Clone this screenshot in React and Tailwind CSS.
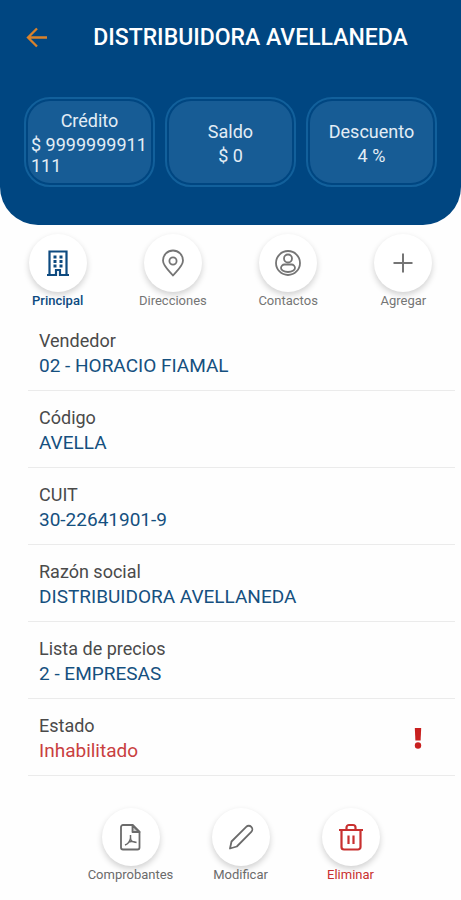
import React, { useState } from 'react';
import clsx from 'clsx';

const summary = [
    { label: 'Crédito', value: '$ 9999999911111' },
    { label: 'Saldo', value: '$ 0' },
    { label: 'Descuento', value: '4 %' },
];

const tabs = [
    { id: 'principal', label: 'Principal', icon: BuildingIcon },
    { id: 'direcciones', label: 'Direcciones', icon: PinIcon },
    { id: 'contactos', label: 'Contactos', icon: ContactIcon },
    { id: 'agregar', label: 'Agregar', icon: PlusIcon },
];

const fields = [
    { label: 'Vendedor', value: '02 - HORACIO FIAMAL' },
    { label: 'Código', value: 'AVELLA' },
    { label: 'CUIT', value: '30-22641901-9' },
    { label: 'Razón social', value: 'DISTRIBUIDORA AVELLANEDA' },
    { label: 'Lista de precios', value: '2 - EMPRESAS' },
    { label: 'Estado', value: 'Inhabilitado', alert: true },
];

const actions = [
    { label: 'Comprobantes', icon: PdfIcon },
    { label: 'Modificar', icon: PencilIcon },
    { label: 'Eliminar', icon: TrashIcon, danger: true },
];

function ArrowIcon() {
    return (
        <svg width="24" height="24" viewBox="0 0 24 24" fill="none" stroke="currentColor" strokeWidth="2.3">
            <path d="M23 11.500H4M13 2.500l-9 9 9 9" />
        </svg>
    );
}

function BuildingIcon() {
    return (
        <svg width="28" height="28" viewBox="0 0 28 28" fill="none" stroke="currentColor" strokeWidth="2.200">
            <path d="M5.500 26V2.500h17V26M3 26h9v-5h4v5h9" />
            <path d="M9.500 8h3M15.500 8h3M9.500 12.500h3M15.500 12.500h3M9.500 17h3M15.500 17h3" strokeWidth="2.800" />
        </svg>
    );
}

function PinIcon() {
    return (
        <svg width="28" height="28" viewBox="0 0 28 28" fill="none" stroke="currentColor" strokeWidth="1.8" strokeLinejoin="round">
            <path d="M14 26.500C10.500 22 4 17 4 11.500a10 10 0 0 1 20 0C24 17 17.500 22 14 26.500z" />
            <circle cx="14" cy="12" r="3.600" />
        </svg>
    );
}

function ContactIcon() {
    return (
        <svg width="28" height="28" viewBox="0 0 28 28" fill="none" stroke="currentColor" strokeWidth="1.8">
            <circle cx="14" cy="14" r="12" />
            <circle cx="14" cy="9.500" r="4" />
            <path d="M10.500 15.500h7a3.500 3.500 0 0 1 3.500 3.500c0 2-3 4-7 4s-7-2-7-4a3.500 3.500 0 0 1 3.500-3.500z" />
        </svg>
    );
}

function PlusIcon() {
    return (
        <svg width="28" height="28" viewBox="0 0 28 28" fill="none" stroke="currentColor" strokeWidth="2">
            <path d="M14 4.500v19M4.500 14h19" />
        </svg>
    );
}

function PdfIcon() {
    return (
        <svg width="28" height="28" viewBox="0 0 28 28" fill="none" stroke="currentColor" strokeWidth="1.8" strokeLinejoin="round">
            <path d="M15.500 2H6a2 2 0 0 0-2 2v20.500a2 2 0 0 0 2 2h14.500a2 2 0 0 0 2-2V9z" />
            <path d="M15.500 2v7h7z" fill="currentColor" fillOpacity="0.35" />
            <path d="M13.500 12v3c0 2.500 2.500 4.500 6 4.500M8 22c3-1 5-4 5.500-7M11.500 19c2.500-.8 5-.5 8 .5" strokeWidth="1.5" />
        </svg>
    );
}

function PencilIcon() {
    return (
        <svg width="28" height="28" viewBox="0 0 28 28" fill="none" stroke="currentColor" strokeWidth="1.8" strokeLinejoin="round">
            <path d="M3 25.500l1.500-7L19.200 3.800a3.600 3.600 0 0 1 5.100 5.100L9.800 23.500z" />
        </svg>
    );
}

function TrashIcon() {
    return (
        <svg width="28" height="28" viewBox="0 0 28 28" fill="none" stroke="currentColor" strokeWidth="2.200" strokeLinejoin="round">
            <path d="M2 7h24M9.500 7V4.500A2.500 2.500 0 0 1 12 2h4a2.500 2.500 0 0 1 2.500 2.500V7M4.500 7v17A2.500 2.500 0 0 0 7 26.500h14a2.500 2.500 0 0 0 2.500-2.500V7" />
            <path d="M11.500 12.500v8.500M16.500 12.500v8.500" />
        </svg>
    );
}

function AlertIcon() {
    return (
        <svg width="8" height="22" viewBox="0 0 8 22" fill="currentColor" className="text-[#c8201f]">
            <path d="M.8 1h6.400l-.6 12.500H1.400z" />
            <circle cx="4" cy="18.500" r="3.200" />
        </svg>
    );
}

function RoundButton({ label, icon: Icon, className, ...props }) {
    return (
        <button type="button" className={clsx('flex flex-col items-center text-[13px] leading-[18px]', className)} {...props}>
            <span className="flex size-[58px] items-center justify-center rounded-full bg-white shadow-[0_3px_6px_rgba(0,0,0,0.18)]">
                <Icon />
            </span>
            {label}
        </button>
    );
}

export default function App() {
    const [activeTab, setActiveTab] = useState('principal');

    return (
        <div className="min-h-screen bg-[#fefefe] font-[Roboto,sans-serif]">
            <header className="rounded-b-[38px] bg-[#004681] px-6 pt-[22px] pb-[38px] text-white">
                <div className="flex h-8 items-center">
                    <button type="button" aria-label="Volver" className="text-[#d9822b]">
                        <ArrowIcon />
                    </button>
                    <h1 className="flex-1 pl-4 text-center text-[23px] leading-8 font-medium">DISTRIBUIDORA AVELLANEDA</h1>
                </div>

                <div className="mt-[43px] grid grid-cols-3 gap-2.5">
                    {summary.map((item) => (
                        <div key={item.label} className="rounded-[26px] border-2 border-[#12609b] p-0.5">
                            <div className="flex h-[82px] flex-col items-center justify-center rounded-[22px] bg-[#175c95] px-[3px] text-lg text-[#e3edf5]">
                                <span className="leading-[26px]">{item.label}</span>
                                <span className="leading-[21px] break-all">{item.value}</span>
                            </div>
                        </div>
                    ))}
                </div>
            </header>

            <nav className="grid grid-cols-4 pt-[9px]">
                {tabs.map((tab) => (
                    <RoundButton
                        key={tab.id}
                        label={tab.label}
                        icon={tab.icon}
                        onClick={() => setActiveTab(tab.id)}
                        className={activeTab === tab.id ? 'font-medium text-[#0d4a80]' : 'text-[#757575]'}
                    />
                ))}
            </nav>

            <dl className="mt-1 mr-1.5 ml-7">
                {fields.map((field) => (
                    <div key={field.label} className="flex items-center justify-between border-b border-[#ebebeb] pt-3.5 pr-[33px] pb-3 pl-[11px]">
                        <div>
                            <dt className="text-[18px] leading-[25px] text-[#4a4a4a]">{field.label}</dt>
                            <dd className={clsx('text-[19px] leading-[25px]', field.alert ? 'text-[#c9403f]' : 'text-[#15507f]')}>
                                {field.value}
                            </dd>
                        </div>
                        {field.alert && <AlertIcon />}
                    </div>
                ))}
            </dl>

            <div className="flex justify-center pt-8 pb-4 pl-5">
                {actions.map((action) => (
                    <RoundButton
                        key={action.label}
                        label={action.label}
                        icon={action.icon}
                        className={clsx('w-[110px]', action.danger ? 'text-[#c8302f]' : 'text-[#6b6b6b]')}
                    />
                ))}
            </div>
        </div>
    );
}
